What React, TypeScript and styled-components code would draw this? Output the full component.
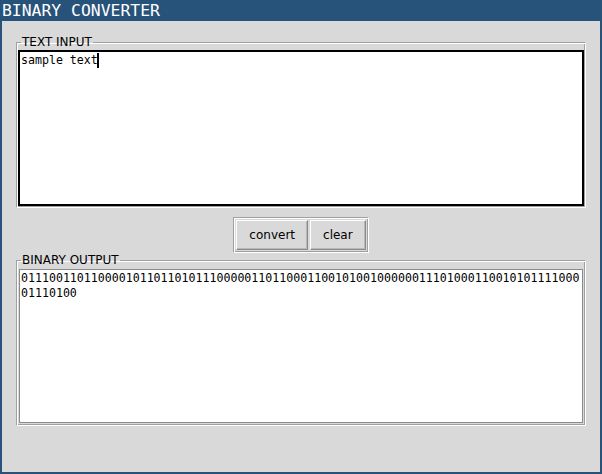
import React from "react";
import styled, { createGlobalStyle } from "styled-components";

const Global = createGlobalStyle`
  html, body { margin: 0; padding: 0; background: #d9d9d9; }
  #root { width: 602px; height: 474px; }
  * { box-sizing: border-box; }
`;

const Window = styled.div`
  width: 602px;
  height: 474px;
  display: flex;
  flex-direction: column;
  border: 2px solid #27537a;
  border-top: none;
  background: #d9d9d9;
`;

const TitleBar = styled.div`
  height: 21px;
  margin: 0 -2px;
  padding-left: 2px;
  background: #27537a;
  color: #ffffff;
  font-family: "DejaVu Sans Mono", monospace;
  font-size: 16.4px;
  line-height: 21px;
  white-space: nowrap;
`;

const Body = styled.div`
  flex: 1;
  display: flex;
  flex-direction: column;
  align-items: stretch;
  padding: 14px 14px 0 14px;
`;

const Group = styled.fieldset`
  margin: 0;
  padding: 1px 0 0 0;
  min-width: 0;
  border: 1px solid;
  border-color: #a0a0a0 #ffffff #ffffff #a0a0a0;
  box-shadow: inset 1px 1px 0 #ffffff, inset -1px -1px 0 #a0a0a0;
`;

const Legend = styled.legend`
  margin-left: 4px;
  padding: 0 1px;
  font-family: "DejaVu Sans", sans-serif;
  font-size: 12px;
  line-height: 14px;
  color: #000000;
`;

const TextBox = styled.div<{ $focused?: boolean }>`
  height: 156px;
  margin: 0 1px 1px 1px;
  background: #ffffff;
  border: 1px solid ${(p) => (p.$focused ? "#000000" : "#d9d9d9")};
  box-shadow: ${(p) =>
    p.$focused
      ? "inset 1px 1px 0 #000000, inset -1px -1px 0 #000000"
      : "inset 1px 1px 0 #8a8a8a, inset -1px -1px 0 #8a8a8a"};
  padding: 2px 2px;
  font-family: "DejaVu Sans Mono", monospace;
  font-size: 11.6px;
  line-height: 15px;
  color: #000000;
  word-break: break-all;
  overflow: hidden;
`;

const Caret = styled.span`
  display: inline-block;
  width: 2px;
  height: 15px;
  margin-left: -1px;
  vertical-align: top;
  background: #000000;
`;

const ButtonRow = styled.div`
  align-self: center;
  display: flex;
  gap: 2px;
  margin-top: 9px;
  margin-bottom: 0;
  border: 1px solid;
  border-color: #a0a0a0 #ffffff #ffffff #a0a0a0;
  box-shadow: inset 1px 1px 0 #ffffff, inset -1px -1px 0 #a0a0a0;
  padding: 2px;
`;

const Button = styled.button`
  height: 30px;
  padding: 0 12px;
  margin: 0;
  background: #d9d9d9;
  border: 1px solid;
  border-color: #ffffff #8a8a8a #8a8a8a #ffffff;
  box-shadow: inset -1px -1px 0 #b8b8b8;
  font-family: "DejaVu Sans", sans-serif;
  font-size: 12px;
  color: #000000;
  cursor: pointer;
`;

const binary = "sample text"
  .split("")
  .map((c) => c.charCodeAt(0).toString(2).padStart(8, "0"))
  .join("");

export default function App() {
  return (
    <>
      <Global />
      <Window>
        <TitleBar>BINARY CONVERTER</TitleBar>
        <Body>
          <Group>
            <Legend>TEXT INPUT</Legend>
            <TextBox $focused>
              sample text
              <Caret />
            </TextBox>
          </Group>
          <ButtonRow>
            <Button>convert</Button>
            <Button>clear</Button>
          </ButtonRow>
          <Group>
            <Legend>BINARY OUTPUT</Legend>
            <TextBox>{binary}</TextBox>
          </Group>
        </Body>
      </Window>
    </>
  );
}
